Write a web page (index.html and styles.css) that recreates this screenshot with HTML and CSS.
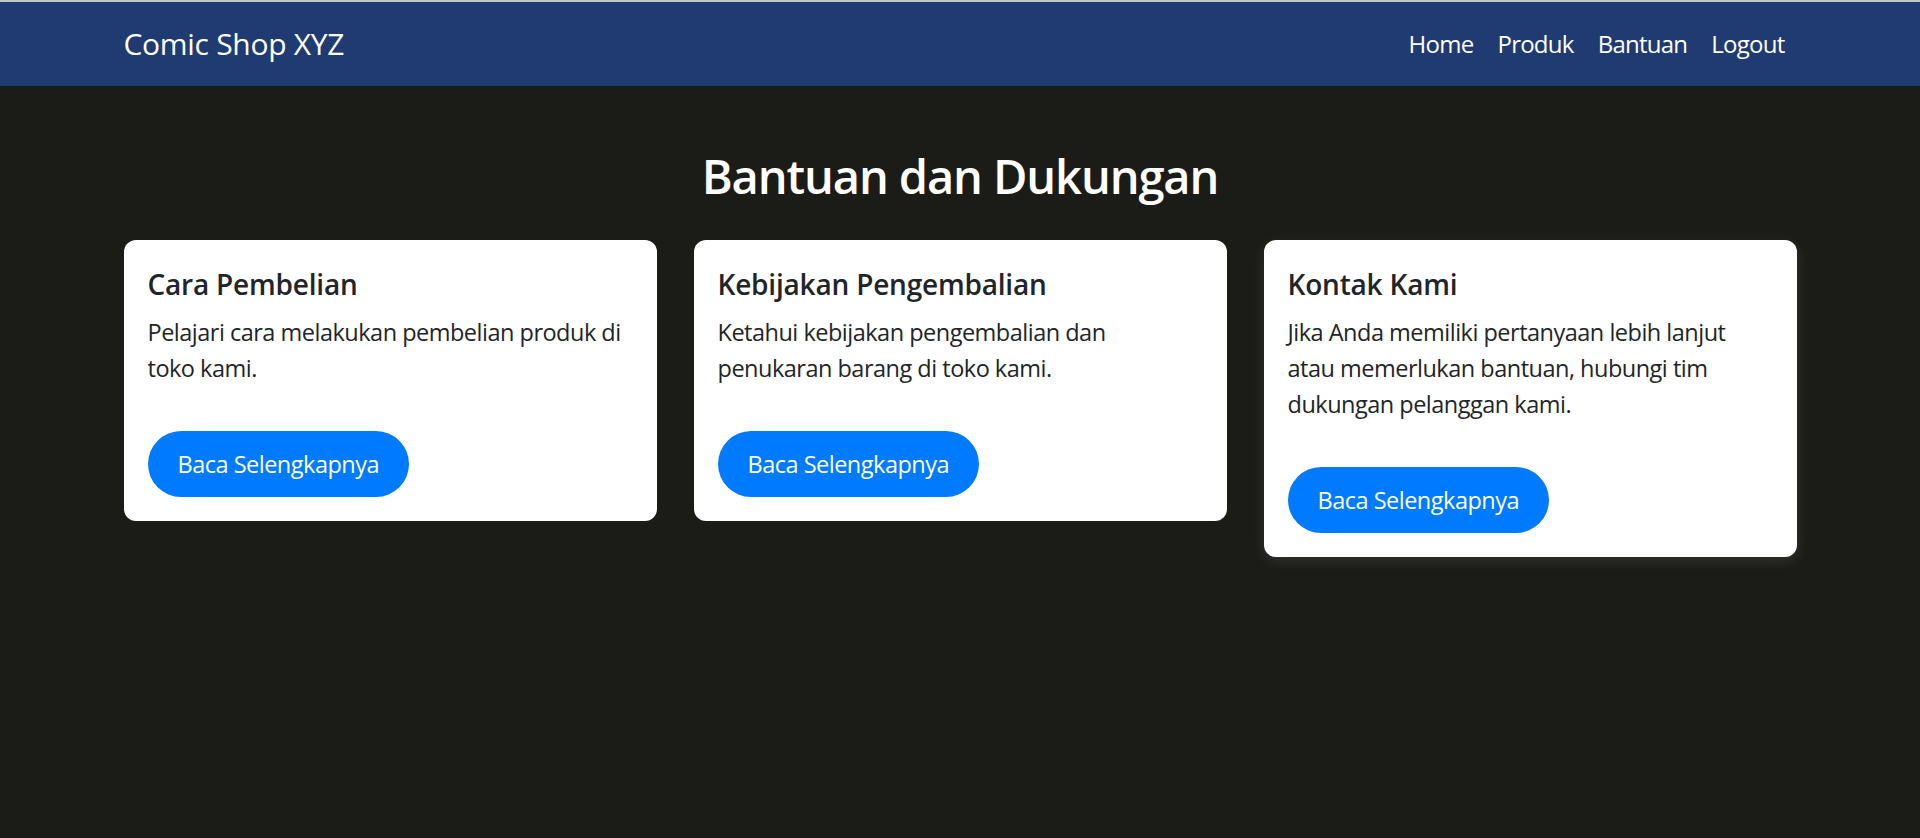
FILE: index.html
```html
<!DOCTYPE html>
<html lang="id">
<head>
<meta charset="utf-8">
<title>Bantuan - Comic Shop XYZ</title>
<link rel="stylesheet" href="styles.css">
</head>
<body>
<div class="topline"></div>
<nav class="navbar">
  <div class="container nav-inner">
    <a class="brand" href="#">Comic Shop XYZ</a>
    <ul class="nav-links">
      <li><a href="#">Home</a></li>
      <li><a href="#">Produk</a></li>
      <li><a href="#">Bantuan</a></li>
      <li><a href="#">Logout</a></li>
    </ul>
  </div>
</nav>
<main class="container">
  <h2 class="page-title">Bantuan dan Dukungan</h2>
  <div class="cards">
    <div class="card">
      <h5 class="card-title">Cara Pembelian</h5>
      <p class="card-text">Pelajari cara melakukan pembelian produk di toko kami.</p>
      <a class="btn" href="#">Baca Selengkapnya</a>
    </div>
    <div class="card">
      <h5 class="card-title">Kebijakan Pengembalian</h5>
      <p class="card-text">Ketahui kebijakan pengembalian dan penukaran barang di toko kami.</p>
      <a class="btn" href="#">Baca Selengkapnya</a>
    </div>
    <div class="card card-raised">
      <h5 class="card-title">Kontak Kami</h5>
      <p class="card-text">Jika Anda memiliki pertanyaan lebih lanjut atau memerlukan bantuan, hubungi tim dukungan pelanggan kami.</p>
      <a class="btn" href="#">Baca Selengkapnya</a>
    </div>
  </div>
</main>
</body>
</html>
```
FILE: styles.css
```css
* {
  box-sizing: border-box;
}

html, body {
  margin: 0;
  padding: 0;
}

body {
  background: #1b1c17;
  font-family: "Open Sans", "Noto Sans", sans-serif;
  font-size: 23.5px;
  line-height: 36px;
  color: #212529;
  min-height: 838px;
}

.topline {
  height: 2px;
  background: #c6c6c6;
}

.container {
  width: 1673px;
  margin: 0 auto;
}

.navbar {
  background: #1f3b72;
  height: 84px;
}

.nav-inner {
  height: 100%;
  display: flex;
  align-items: center;
  justify-content: space-between;
}

.brand {
  color: #fff;
  text-decoration: none;
  font-size: 30px;
  line-height: 1.2;
  letter-spacing: -0.3px;
}

.nav-links {
  list-style: none;
  margin: 0;
  padding: 0;
  display: flex;
}

.nav-links a {
  display: block;
  color: #fff;
  text-decoration: none;
  font-size: 24px;
  line-height: 36px;
  padding: 0 12px;
  letter-spacing: -0.75px;
}

.page-title {
  margin: 62px 0 36px;
  text-align: center;
  color: #fff;
  font-size: 47px;
  line-height: 1.2;
  font-weight: 600;
  letter-spacing: -1.1px;
}

.cards {
  display: grid;
  grid-template-columns: repeat(3, 1fr);
  gap: 37px;
  align-items: start;
}

.card {
  background: #fff;
  border-radius: 12px;
  padding: 24px;
}

.card-raised {
  box-shadow: 0 4px 14px rgba(255, 255, 255, 0.1);
}

.card-title {
  margin: 3px 0 13px;
  font-size: 28px;
  line-height: 34px;
  font-weight: 600;
  letter-spacing: -0.2px;
  color: #212529;
}

.card-text {
  margin: 0 0 45px;
  letter-spacing: -0.5px;
}

.btn {
  display: inline-block;
  background: #007bff;
  color: #fff;
  text-decoration: none;
  padding: 15px 30px;
  border-radius: 40px;
  font-size: 23.5px;
  line-height: 36px;
  letter-spacing: -0.5px;
}
```
